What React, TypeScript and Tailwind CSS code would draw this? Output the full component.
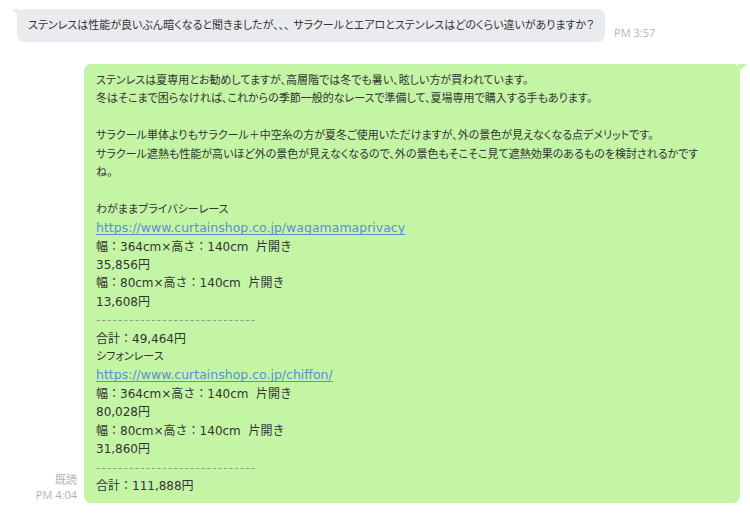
import React from "react";

type Kind = "jp" | "spec" | "num" | "link" | "rule" | "blank";
type Line = { text: string; kind: Kind };

const reply: Line[] = [
  { text: "ステンレスは夏専用とお勧めしてますが、高層階では冬でも暑い、眩しい方が買われています。", kind: "jp" },
  { text: "冬はそこまで困らなければ、これからの季節一般的なレースで準備して、夏場専用で購入する手もあります。", kind: "jp" },
  { text: "", kind: "blank" },
  { text: "サラクール単体よりもサラクール＋中空糸の方が夏冬ご使用いただけますが、外の景色が見えなくなる点デメリットです。", kind: "jp" },
  { text: "サラクール遮熱も性能が高いほど外の景色が見えなくなるので、外の景色もそこそこ見て遮熱効果のあるものを検討されるかです", kind: "jp" },
  { text: "ね。", kind: "jp" },
  { text: "", kind: "blank" },
  { text: "わがままプライバシーレース", kind: "jp" },
  { text: "https://www.curtainshop.co.jp/wagamamaprivacy", kind: "link" },
  { text: "幅：364cm×高さ：140cm  片開き", kind: "spec" },
  { text: "35,856円", kind: "num" },
  { text: "幅：80cm×高さ：140cm  片開き", kind: "spec" },
  { text: "13,608円", kind: "num" },
  { text: "-----------------------------", kind: "rule" },
  { text: "合計：49,464円", kind: "spec" },
  { text: "シフォンレース", kind: "jp" },
  { text: "https://www.curtainshop.co.jp/chiffon/", kind: "link" },
  { text: "幅：364cm×高さ：140cm  片開き", kind: "spec" },
  { text: "80,028円", kind: "num" },
  { text: "幅：80cm×高さ：140cm  片開き", kind: "spec" },
  { text: "31,860円", kind: "num" },
  { text: "-----------------------------", kind: "rule" },
  { text: "合計：111,888円", kind: "spec" },
];

// Japanese runs are set a touch smaller with proportional kana, Latin runs a touch larger
const lineClass: Record<Kind, string> = {
  jp: "text-[11px] [font-feature-settings:'palt']",
  spec: "text-[12px]",
  num: "text-[12px]",
  link: "text-[12.5px]",
  rule: "text-[12px] tracking-[1.2px] text-[#8f9f86]",
  blank: "",
};

export default function App() {
  return (
    <div className="w-[750px] h-[519px] bg-white text-[#333] font-['DejaVu_Sans','Noto_Sans_CJK_JP',sans-serif]">
      {/* incoming */}
      <div className="flex items-end pl-[17px] pt-[9px]">
        <div className="relative rounded-[7px] bg-[#eaebef] px-[11px] py-[9px] text-[11px] leading-[15px] whitespace-nowrap [font-feature-settings:'palt']">
          <span className="absolute -left-[6px] top-0 h-0 w-0 border-t-[7px] border-t-[#eaebef] border-l-[8px] border-l-transparent" />
          ステンレスは性能が良いぶん暗くなると聞きましたが、、、 サラクールとエアロとステンレスはどのくらい違いがありますか？
        </div>
        <span className="ml-[9px] mb-[1px] font-['Open_Sans',sans-serif] text-[11px] text-[#b4b4b4]">PM 3:57</span>
      </div>

      {/* outgoing */}
      <div className="flex items-end justify-end gap-[7px] pr-[10px] pt-[22px]">
        <div className="mb-[1px] flex flex-col items-end text-[11px] leading-[15px] text-[#b4b4b4] font-['Open_Sans','Noto_Sans_CJK_JP',sans-serif]">
          <span>既読</span>
          <span>PM 4:04</span>
        </div>
        <div className="relative w-[656px] rounded-[7px] bg-[#c3f5a5] px-[12px] py-[8px] leading-[18.4px]">
          <span className="absolute -right-[7px] top-0 h-0 w-0 border-t-[8px] border-t-[#c3f5a5] border-r-[9px] border-r-transparent" />
          {reply.map((l, i) => {
            if (l.kind === "blank") return <div key={i} className="h-[18.4px]" />;
            return (
              <div key={i} className={`whitespace-pre ${lineClass[l.kind]}`}>
                {l.kind === "link" ? (
                  <a className="text-[#5b8ed8] underline underline-offset-2">{l.text}</a>
                ) : (
                  l.text
                )}
              </div>
            );
          })}
        </div>
      </div>
    </div>
  );
}
